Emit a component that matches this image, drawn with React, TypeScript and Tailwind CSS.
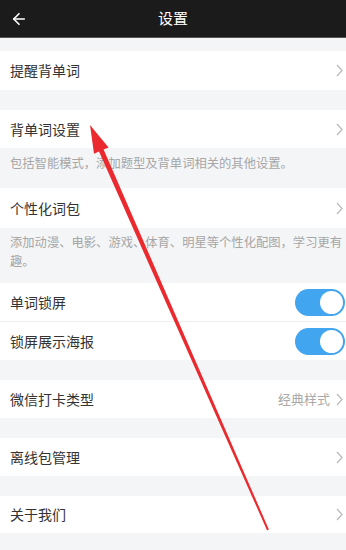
import { ArrowLeft } from 'lucide-react';

const font = { fontFamily: '"Noto Sans CJK SC", "Noto Sans", sans-serif' };

function Chevron() {
  return (
    <svg width="7" height="13" viewBox="0 0 7 13" className="text-[#bbbbbb]">
      <polyline points="1,1 6,6.5 1,12" fill="none" stroke="currentColor" strokeWidth="1.3" />
    </svg>
  );
}

function Row({ label, h, value, border }: { label: string; h: string; value?: string; border?: boolean }) {
  return (
    <div className={`flex items-center justify-between bg-white pl-[10px] pr-[3px] ${h} ${border ? 'border-b border-[#eeeeee]' : ''}`}>
      <span className="text-[14px] text-[#333333]">{label}</span>
      <div className="flex items-center gap-[6px]">
        {value && <span className="text-[13px] text-[#aaaaaa]">{value}</span>}
        <Chevron />
      </div>
    </div>
  );
}

function Toggle() {
  return (
    <div className="w-[50px] h-[27px] rounded-full bg-[#42a5f0] flex items-center justify-end pr-[2px]">
      <div className="w-[23px] h-[23px] rounded-full bg-white" />
    </div>
  );
}

function ToggleRow({ label, h, border }: { label: string; h: string; border?: boolean }) {
  return (
    <div className={`flex items-center justify-between bg-white pl-[10px] pr-[1px] ${h} ${border ? 'border-b border-[#eeeeee]' : ''}`}>
      <span className="text-[14px] text-[#333333]">{label}</span>
      <Toggle />
    </div>
  );
}

export default function App() {
  return (
    <div className="relative w-[346px] h-[550px] bg-[#f4f5f7] overflow-hidden" style={font}>
      {/* Header */}
      <div className="h-[38px] bg-[#1b1b1b] border-b border-[#555555] flex items-center relative">
        <ArrowLeft size={18} strokeWidth={2.2} className="text-white ml-[10px]" />
        <span className="absolute left-0 right-0 text-center text-[15px] text-white">设置</span>
      </div>

      <div className="h-[13px]" />
      <Row label="提醒背单词" h="h-[39px]" />
      <div className="h-[20px]" />
      <Row label="背单词设置" h="h-[38px]" />
      <div className="h-[40px] px-[10px] pt-[6px] text-[12.3px] text-[#a6a6a6] leading-[19px]">
        包括智能模式，添加题型及背单词相关的其他设置。
      </div>
      <Row label="个性化词包" h="h-[40px]" />
      <div className="h-[55px] pl-[10px] pr-[2px] pt-[5px] text-[12.3px] text-[#a6a6a6] leading-[19px]">
        添加动漫、电影、游戏、体育、明星等个性化配图，学习更有趣。
      </div>
      <ToggleRow label="单词锁屏" h="h-[39px]" border />
      <ToggleRow label="锁屏展示海报" h="h-[38px]" />
      <div className="h-[20px]" />
      <Row label="微信打卡类型" h="h-[38px]" value="经典样式" />
      <div className="h-[20px]" />
      <Row label="离线包管理" h="h-[38px]" />
      <div className="h-[20px]" />
      <Row label="关于我们" h="h-[37px]" />

      {/* annotation arrow */}
      <svg className="absolute left-0 top-0 pointer-events-none" width="346" height="550">
        <polygon
          points="90,125 108.6,147.4 103.6,149.6 268.9,529.6 267.1,530.4 99,151.6 94,153.8"
          fill="#ea2a2e"
        />
      </svg>
    </div>
  );
}
